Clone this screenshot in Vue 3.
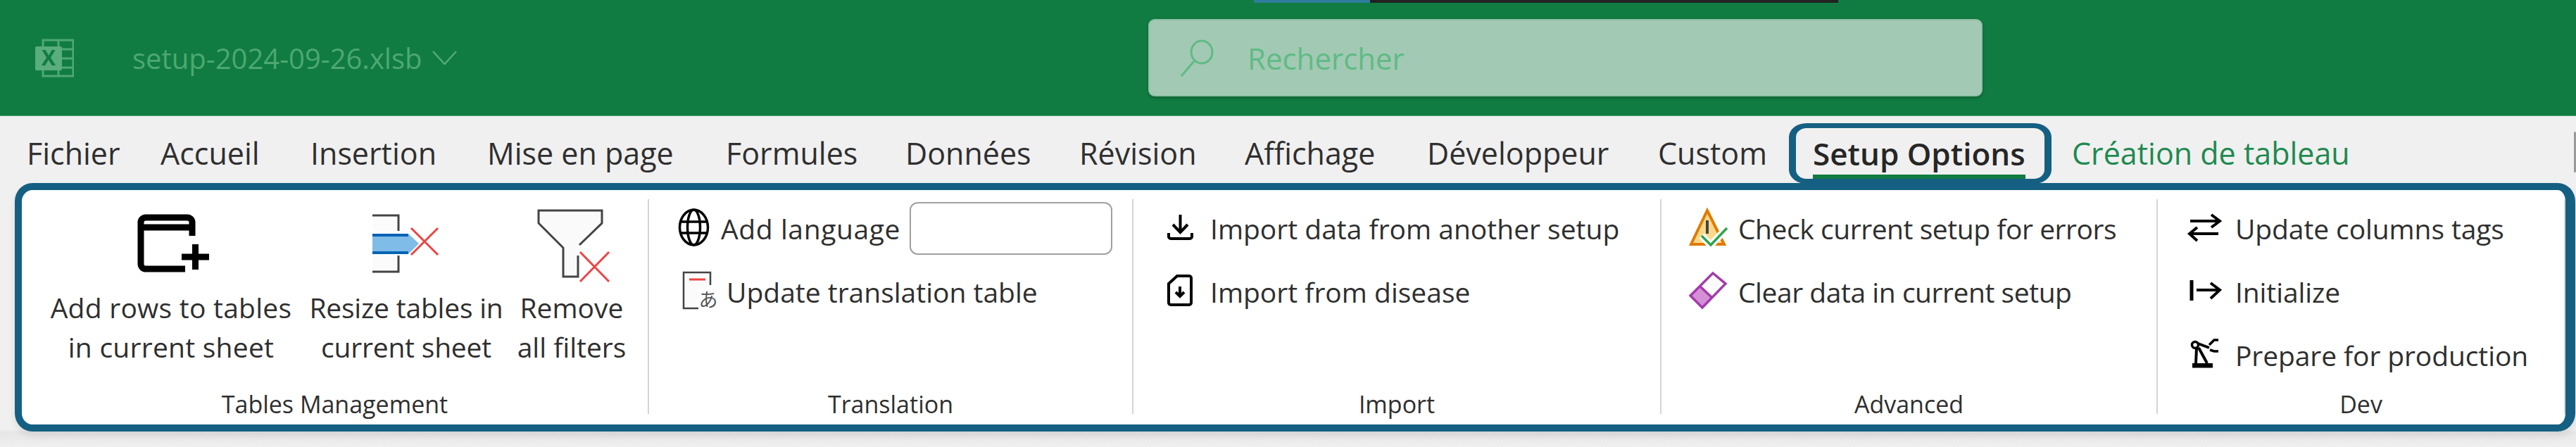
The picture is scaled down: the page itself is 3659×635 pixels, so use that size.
<template>
  <div class="page">
    <header class="titlebar">
      <span class="strip"><i class="strip-blue" /><i class="strip-dark" /></span>
      <div class="file">
        <svg class="excel" viewBox="50 55 55 55">
          <g fill="none" stroke="#4fa873" stroke-width="3">
            <path d="M61 66V57H104V108H61V100" />
            <path d="M83 57V108M88 70H104M88 83H104M88 96H104" />
          </g>
          <rect x="50" y="66" width="38" height="34" rx="2" fill="#5aad7c" />
          <text x="69" y="93" class="excel-x" text-anchor="middle">X</text>
        </svg>
        <span class="file-name">setup-2024-09-26.xlsb</span>
        <svg class="chevron" viewBox="0 0 35 20" preserveAspectRatio="none">
          <path d="M1 1L17.5 19L34 1" fill="none" stroke="#55aa78" stroke-width="2.5" />
        </svg>
      </div>
      <div class="search">
        <svg class="search-icon" viewBox="1675 54 52 56">
          <ellipse cx="1707" cy="74" rx="15" ry="16" fill="none" stroke="#5fbb85" stroke-width="3" />
          <path d="M1696 87L1678 108" stroke="#5fbb85" stroke-width="3" />
        </svg>
        <span class="search-text">Rechercher</span>
      </div>
    </header>

    <nav class="tabs">
      <span
        v-for="t in tabs"
        :key="t.label"
        class="tab"
        :class="{ active: t.active, contextual: t.contextual }"
        :style="{ width: t.width + 'px' }"
      >{{ t.label }}</span>
      <i class="edge-mark" />
    </nav>

    <section class="ribbon">
      <div class="group g-tables">
        <div class="big-row">
          <button class="big b1">
            <svg class="big-icon" viewBox="188 283 110 126">
              <path d="M273 335V316a7 7 0 0 0-7-7H207a7 7 0 0 0-7 7V375a7 7 0 0 0 7 7H263M200 323H273" fill="none" stroke="#000" stroke-width="9" />
              <path d="M258 365H297M277.5 347V383" stroke="#000" stroke-width="9" />
            </svg>
            <span>Add rows to tables<br />in current sheet</span>
          </button>
          <button class="big b2">
            <svg class="big-icon" viewBox="522 283 110 126">
              <path d="M529 306H566V329H529ZM529 363H566V386H529Z" fill="#fbfbfb" />
              <path d="M529 306H566V328M529 386H566V363" fill="none" stroke="#444" stroke-width="3" />
              <path d="M529 333H581L595 346L581 360H529Z" fill="#7fbce8" />
              <path d="M529 334H580M529 359H580" stroke="#0563b5" stroke-width="4" />
              <path d="M584 324L622 362M622 324L584 362" stroke="#ee4444" stroke-width="3" />
            </svg>
            <span>Resize tables in<br />current sheet</span>
          </button>
          <button class="big b3">
            <svg class="big-icon" viewBox="757 283 110 126">
              <path d="M765 299H855V317L822 350V393H800V352L765 317Z" fill="#fafafa" />
              <path d="M823 348L855 317V299H765V317L800 352V393H821V363" fill="none" stroke="#444" stroke-width="3" />
              <path d="M824 358L865 400M865 358L824 400" stroke="#ee4444" stroke-width="3" />
            </svg>
            <span>Remove<br />all filters</span>
          </button>
        </div>
        <div class="group-label">Tables Management</div>
      </div>

      <div class="group g-translation">
        <div class="group-body">
          <div class="row">
            <svg class="ic-66" viewBox="958 279 66 90">
              <g fill="none" stroke="#000" stroke-width="3.5">
                <ellipse cx="985.5" cy="323" rx="20" ry="25" />
                <ellipse cx="985.5" cy="323" rx="9" ry="25" />
                <path d="M966 315H1005M966 331H1005" />
              </g>
            </svg>
            <span class="add-lang">Add language</span>
            <input class="lang-input" type="text" />
          </div>
          <div class="row">
            <svg class="ic-74" viewBox="958 369 74 90">
              <path d="M971 387H1009V410H992V438H971Z" fill="#fbfbfb" />
              <path d="M1009 405V387H971V438H992" fill="none" stroke="#444" stroke-width="2.5" />
              <path d="M979 397H1002" stroke="#ee4444" stroke-width="3" />
              <text x="1006" y="436" class="kana" text-anchor="middle">あ</text>
            </svg>
            <span>Update translation table</span>
          </div>
        </div>
        <div class="group-label">Translation</div>
      </div>

      <div class="group g-import">
        <div class="group-body">
          <div class="row">
            <svg class="ic-65" viewBox="1656 279 65 90">
              <g fill="none" stroke="#000" stroke-width="4">
                <path d="M1678.5 305V329M1668 319L1678.5 330L1689 319" />
                <path d="M1662 331V336a3 3 0 0 0 3 3H1692a3 3 0 0 0 3-3V331" />
              </g>
            </svg>
            <span>Import data from another setup</span>
          </div>
          <div class="row">
            <svg class="ic-65" viewBox="1656 369 65 90">
              <g fill="none" stroke="#000" stroke-width="4">
                <path d="M1662 403L1674 392H1691a3 3 0 0 1 3 3V430a3 3 0 0 1-3 3H1665a3 3 0 0 1-3-3Z" />
                <path d="M1678 407V420M1672 415L1678 421L1684 415" />
              </g>
            </svg>
            <span>Import from disease</span>
          </div>
        </div>
        <div class="group-label">Import</div>
      </div>

      <div class="group g-advanced">
        <div class="group-body">
          <div class="row">
            <svg class="ic-74" viewBox="2396 279 74 90">
              <path d="M2426 299L2403 347H2450Z" fill="#fbd98a" stroke="#e07b00" stroke-width="4" />
              <path d="M2426 313V332" stroke="#444" stroke-width="4" />
              <path d="M2418 335L2431 348L2454 324" fill="none" stroke="#fff" stroke-width="10" />
              <path d="M2418 335L2431 348L2454 324" fill="none" stroke="#2ea44f" stroke-width="3.5" />
            </svg>
            <span>Check current setup for errors</span>
          </div>
          <div class="row">
            <svg class="ic-74" viewBox="2396 369 74 90">
              <path d="M2416 407L2434 388L2452 403L2433 423Z" fill="#fbfbfb" />
              <path d="M2416 407L2402 420L2419 437L2433 423Z" fill="#d58fd6" />
              <path d="M2434 388L2452 403L2419 437L2402 420ZM2416 407L2433 423" fill="none" stroke="#a23bab" stroke-width="3.5" />
            </svg>
            <span>Clear data in current setup</span>
          </div>
        </div>
        <div class="group-label">Advanced</div>
      </div>

      <div class="group g-dev">
        <div class="group-body">
          <div class="row">
            <svg class="ic-70" viewBox="3107 279 70 90">
              <g fill="none" stroke="#000" stroke-width="4">
                <path d="M3113 314H3154M3143 305L3155 314L3143 323" />
                <path d="M3153 332H3113M3123 323L3112 332L3123 342" />
              </g>
            </svg>
            <span>Update columns tags</span>
          </div>
          <div class="row">
            <svg class="ic-70" viewBox="3107 369 70 90">
              <path d="M3115 398V427" stroke="#000" stroke-width="5" />
              <path d="M3122 412H3154M3142 402L3155 412L3142 424" fill="none" stroke="#000" stroke-width="4" />
            </svg>
            <span>Initialize</span>
          </div>
          <div class="row">
            <svg class="ic-70" viewBox="3107 459 70 90">
              <rect x="3116" y="516" width="29" height="6.5" fill="#000" />
              <path d="M3122 495L3121 516M3125 494L3137 516M3124 488L3140 494" fill="none" stroke="#000" stroke-width="4" />
              <circle cx="3120" cy="490" r="4.5" fill="#fff" stroke="#000" stroke-width="3.5" />
              <path d="M3140 490L3147 483H3153M3141 497L3147 499H3153" fill="none" stroke="#000" stroke-width="3.5" />
            </svg>
            <span>Prepare for production</span>
          </div>
        </div>
        <div class="group-label">Dev</div>
      </div>
    </section>
  </div>
</template>

<script setup>
// width = distance from this tab's text to the next one
const tabs = [
  { label: 'Fichier', width: 190 },
  { label: 'Accueil', width: 213 },
  { label: 'Insertion', width: 251 },
  { label: 'Mise en page', width: 339 },
  { label: 'Formules', width: 255 },
  { label: 'Données', width: 247 },
  { label: 'Révision', width: 235 },
  { label: 'Affichage', width: 259 },
  { label: 'Développeur', width: 328 },
  { label: 'Custom', width: 220 },
  { label: 'Setup Options', width: 368, active: true },
  { label: 'Création de tableau', width: 400, contextual: true },
]
</script>

<style>
html, body { margin: 0; background: #f0f0f0; overflow: hidden; }
</style>

<style scoped>
.page {
  width: 3659px;
  height: 635px;
  overflow: hidden;
  font-family: "Open Sans", "Liberation Sans", sans-serif;
  color: #2f2f2f;
  white-space: nowrap;
  background: linear-gradient(#f0f0f0 610px, #e6e6e6 614px, #f0f0f0 635px);
}

.titlebar {
  position: relative;
  display: flex;
  align-items: center;
  height: 165px;
  box-sizing: border-box;
  padding-left: 50px;
  background: #107c41;
  border-bottom: 1px solid #5aa57b;
}

.strip {
  position: absolute;
  top: 0;
  left: 1781px;
  display: flex;
  height: 4px;
}
.strip-blue { width: 165px; background: #2e7d9f; }
.strip-dark { width: 665px; background: #222; }

.file {
  display: flex;
  align-items: center;
  width: 1581px;
}
.excel { width: 55px; height: 55px; margin-right: 83px; }
.excel-x { font-size: 30px; font-weight: 700; fill: #107c41; }
.file-name { font-size: 40px; color: #4da870; }
.chevron { width: 35px; height: 20px; margin-left: 15px; }

.search {
  display: flex;
  align-items: center;
  width: 1185px;
  height: 110px;
  box-sizing: border-box;
  padding-left: 42px;
  background: #a2c9b3;
  border: 2px solid #8fc0a5;
  border-radius: 9px;
  box-shadow: 0 2px 4px rgba(0, 0, 0, 0.25);
}
.search-icon { width: 52px; height: 56px; margin-right: 45px; }
.search-text { font-size: 42px; color: #5fbb85; }

.tabs {
  position: relative;
  display: flex;
  height: 95px;
  box-sizing: border-box;
  padding: 23px 0 0 38px;
}
.tab {
  position: relative;
  flex-shrink: 0;
  height: 60px;
  font-size: 43px;
  line-height: 60px;
}
.tab.active { font-size: 44px; font-weight: 600; color: #262626; }
.tab.contextual { color: #1e8a4f; }
.tab.active::before {
  content: "";
  position: absolute;
  left: 0;
  top: 60px;
  width: 302px;
  height: 7px;
  background: #107c41;
}
.tab.active::after {
  content: "";
  position: absolute;
  top: -13px;
  left: -34px;
  width: 373px;
  height: 86px;
  box-sizing: border-box;
  border: solid #156082;
  border-width: 7px 10px;
  border-radius: 25px / 20px;
}
.edge-mark {
  position: absolute;
  top: 22px;
  right: 0;
  width: 3px;
  height: 58px;
  background: #999;
  border-radius: 2px;
}

.ribbon {
  position: relative;
  z-index: 1;
  display: flex;
  width: 3637px;
  height: 353px;
  box-sizing: border-box;
  margin-left: 21px;
  padding-top: 13px;
  background: #fff;
  border: solid #156082;
  border-width: 10px 14px 10px 10px;
  border-radius: 25px / 26px;
  box-shadow: 0 6px 10px rgba(0, 0, 0, 0.08);
}

.group {
  display: flex;
  flex-direction: column;
  flex-shrink: 0;
  height: 305px;
  box-sizing: border-box;
  border-right: 2px solid #d4d4d4;
  font-size: 39px;
}
.g-tables { width: 891px; }
.g-translation { width: 688px; }
.g-import { width: 750px; }
.g-advanced { width: 705px; letter-spacing: -0.45px; }
.g-dev { flex: 1; letter-spacing: -0.1px; }

.group-body { flex: 1; margin-top: -4px; }
.g-translation .group-body { padding-left: 36px; }
.g-import .group-body { padding-left: 44px; }
.g-advanced .group-body { padding-left: 35px; }
.g-dev .group-body { padding-left: 40px; }

.group-label {
  height: 40px;
  margin-bottom: -6px;
  font-size: 34px;
  line-height: 40px;
  letter-spacing: 0;
  text-align: center;
}

.big-row {
  display: flex;
  flex: 1;
  padding-left: 29px;
}
.big {
  display: flex;
  flex-direction: column;
  align-items: center;
  flex-shrink: 0;
  padding: 0;
  border: 0;
  background: none;
  color: inherit;
  font: inherit;
  line-height: 56px;
}
.b1 { width: 366px; letter-spacing: 0.25px; }
.b2 { width: 302px; letter-spacing: -0.2px; }
.b3 { width: 168px; }
.big-icon { width: 110px; height: 126px; }

.row {
  display: flex;
  align-items: center;
  height: 90px;
}
.row svg { flex-shrink: 0; height: 90px; }
.ic-65 { width: 65px; }
.ic-66 { width: 66px; }
.ic-70 { width: 70px; }
.ic-74 { width: 74px; }
.kana { font-family: "Noto Sans CJK JP", sans-serif; font-size: 27px; fill: #555; }

.add-lang { letter-spacing: 0.6px; }
.lang-input {
  width: 288px;
  height: 75px;
  box-sizing: border-box;
  margin-left: 13px;
  background: #fff;
  border: 2px solid #a0a0a0;
  border-radius: 12px / 11px;
}
</style>
